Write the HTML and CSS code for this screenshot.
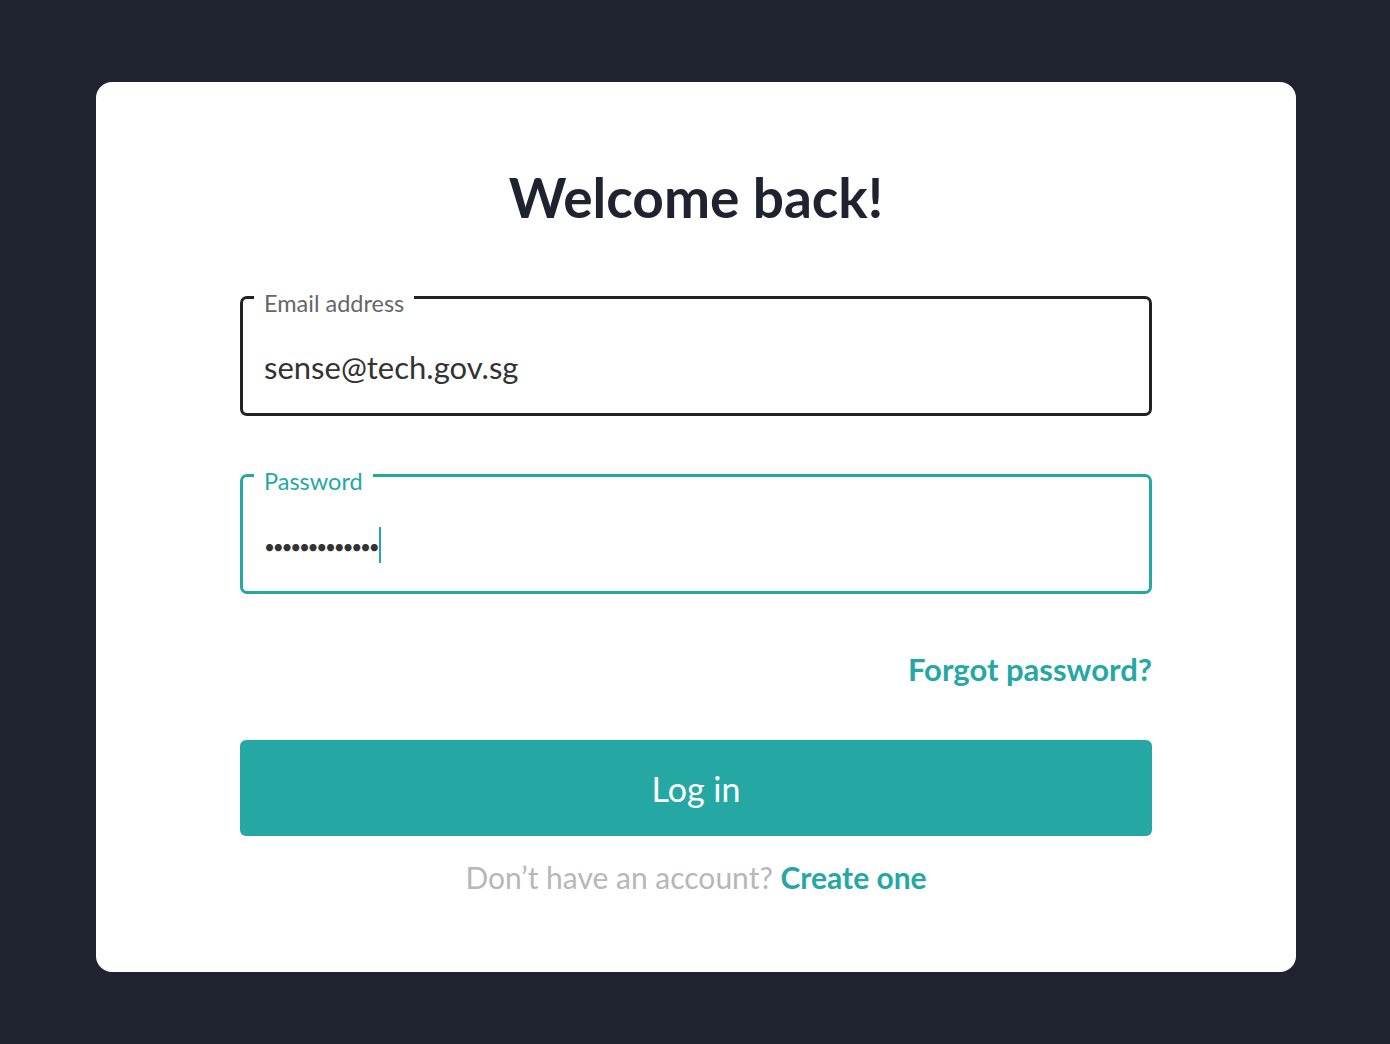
FILE: index.html
```html
<!DOCTYPE html>
<html lang="en">
<head>
<meta charset="utf-8">
<title>Log in</title>
<link rel="stylesheet" href="styles.css">
</head>
<body>
<main class="page">
  <section class="card">
    <h1 class="title">Welcome back!</h1>
    <form class="form">
      <fieldset class="field">
        <legend class="field-label">Email address</legend>
        <div class="field-value">sense@tech.gov.sg</div>
      </fieldset>
      <fieldset class="field field-active">
        <legend class="field-label">Password</legend>
        <div class="field-value"><span class="dots">•••••••••••••</span><span class="caret"></span></div>
      </fieldset>
      <div class="forgot-row"><a class="link forgot" href="#">Forgot password?</a></div>
      <button class="btn" type="button">Log in</button>
      <p class="signup">Don’t have an account? <a class="link" href="#">Create one</a></p>
    </form>
  </section>
</main>
</body>
</html>
```
FILE: styles.css
```css
* { box-sizing: border-box; }
html, body { margin: 0; padding: 0; }
body {
  background: #1f2330;
  font-family: Lato, "Open Sans", "Noto Sans", sans-serif;
  color: #1f2330;
}
.page {
  width: 1390px;
  height: 1044px;
  padding: 82px 94px 0 96px;
}
.card {
  width: 1200px;
  height: 890px;
  background: #ffffff;
  border-radius: 16px;
  padding: 0 144px;
}
.title {
  margin: 0;
  padding-top: 83px;
  font-size: 55px;
  line-height: 64px;
  font-weight: 700;
  text-align: center;
  color: #1f2330;
}
.form {
  margin-top: 51px;
  display: flex;
  flex-direction: column;
}
.field {
  margin: 0 0 42px 0;
  padding: 0 21px;
  border: 3px solid #222222;
  border-radius: 7px;
  height: 136px;
  min-width: 0;
}
.field-label {
  padding: 12px 10px 0;
  margin-left: -10px;
  font-size: 23.5px;
  line-height: 22px;
  color: #666666;
}
.field-active { border-color: #25a8a4; }
.field-active .field-label { color: #25a8a4; }
.field-value {
  display: flex;
  align-items: center;
  height: 36px;
  margin-top: 35px;
  font-size: 31px;
  color: #333333;
}
.dots {
  font-size: 19px;
  line-height: 36px;
  letter-spacing: -2.3px;
  padding-top: 3px;
  color: #333333;
}
.caret {
  display: inline-block;
  width: 2px;
  height: 36px;
  margin-left: 2px;
  background: #25a8a4;
}
.forgot-row {
  display: flex;
  justify-content: flex-end;
  margin-top: 15px;
}
.link {
  color: #25a8a4;
  font-weight: 700;
  text-decoration: none;
}
.forgot {
  font-size: 31px;
  line-height: 36px;
}
.btn {
  margin-top: 53px;
  height: 96px;
  width: 100%;
  border: 0;
  border-radius: 6px;
  background: #25a8a4;
  color: #ffffff;
  font-family: inherit;
  font-size: 34px;
  cursor: pointer;
}
.signup {
  margin: 23px 0 0;
  text-align: center;
  font-size: 30px;
  line-height: 36px;
  color: #b7b7b7;
}
```
